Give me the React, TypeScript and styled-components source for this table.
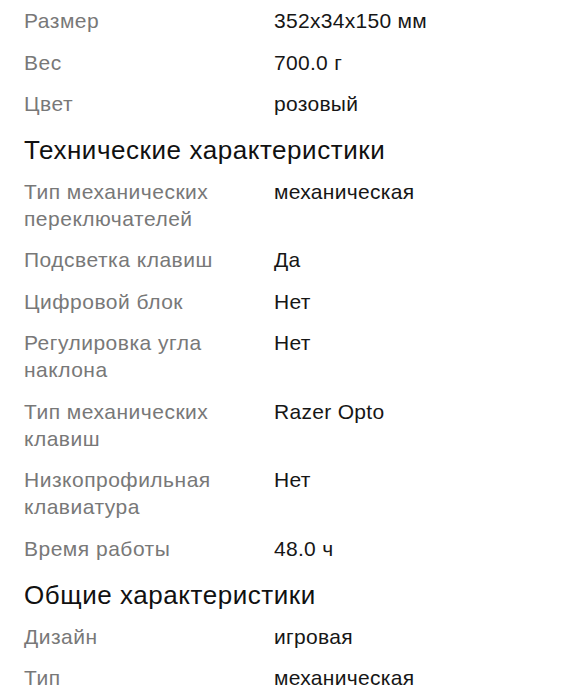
import styled, { createGlobalStyle } from 'styled-components';

const GlobalStyle = createGlobalStyle`
  html, body {
    margin: 0;
    padding: 0;
    background: #fff;
  }
  body {
    font-family: 'Liberation Sans', Arial, 'Noto Sans', sans-serif;
    -webkit-font-smoothing: antialiased;
  }
`;

const StyledPage = styled.main`
  padding: 0 24px;
  overflow: hidden;
`;

const StyledSection = styled.section`
  display: flex;
  flex-direction: column;
`;

const StyledHeading = styled.h2`
  margin: 10.5px 0 5.7px;
  font-size: 26px;
  font-weight: 400;
  letter-spacing: 0.55px;
  line-height: 30px;
  color: #111;
`;

const StyledRow = styled.div`
  display: grid;
  grid-template-columns: 250px 1fr;
  padding: 7.25px 0;
  font-size: 21px;
  letter-spacing: 0.3px;
  line-height: 27px;
`;

const StyledLabel = styled.div`
  padding-right: 20px;
  color: #787878;
  letter-spacing: 0.5px;
`;

const StyledValue = styled.div`
  color: #161616;
`;

type Spec = [string, string];

const sections: { title?: string; items: Spec[] }[] = [
  {
    items: [
      ['Размер', '352x34x150 мм'],
      ['Вес', '700.0 г'],
      ['Цвет', 'розовый'],
    ],
  },
  {
    title: 'Технические характеристики',
    items: [
      ['Тип механических переключателей', 'механическая'],
      ['Подсветка клавиш', 'Да'],
      ['Цифровой блок', 'Нет'],
      ['Регулировка угла наклона', 'Нет'],
      ['Тип механических клавиш', 'Razer Opto'],
      ['Низкопрофильная клавиатура', 'Нет'],
      ['Время работы', '48.0 ч'],
    ],
  },
  {
    title: 'Общие характеристики',
    items: [
      ['Дизайн', 'игровая'],
      ['Тип', 'механическая'],
    ],
  },
];

const App = () => {
  return (
    <>
      <GlobalStyle />
      <StyledPage>
        {sections.map((section, i) => (
          <StyledSection key={i}>
            {section.title && <StyledHeading>{section.title}</StyledHeading>}
            {section.items.map(([label, value]) => (
              <StyledRow key={label}>
                <StyledLabel>{label}</StyledLabel>
                <StyledValue>{value}</StyledValue>
              </StyledRow>
            ))}
          </StyledSection>
        ))}
      </StyledPage>
    </>
  );
};

export default App;
